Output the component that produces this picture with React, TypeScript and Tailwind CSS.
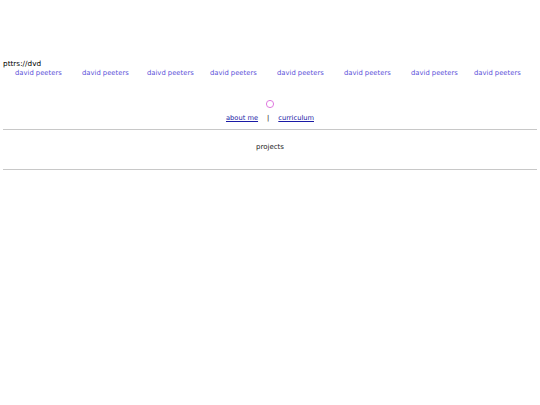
const names = [
  { label: 'david peeters', ml: 'ml-[12px]' },
  { label: 'david peeters', ml: 'ml-[21px]' },
  { label: 'daivd peeters', ml: 'ml-[19px]' },
  { label: 'david peeters', ml: 'ml-[17px]' },
  { label: 'david peeters', ml: 'ml-[21px]' },
  { label: 'david peeters', ml: 'ml-[21px]' },
  { label: 'david peeters', ml: 'ml-[21px]' },
  { label: 'david peeters', ml: 'ml-[17px]' },
]

export default function App() {
  return (
    <div className="min-h-screen bg-white px-[3px] pt-[59px] text-[7px] leading-[9px] text-black [font-family:'DejaVu_Sans',sans-serif]">
      <div className="text-[7.3px]">pttrs://dvd</div>
      <div className="mt-[1px] flex">
        {names.map((n, i) => (
          <a key={i} href="#" className={`${n.ml} w-[46px] whitespace-nowrap text-[6.8px] text-[#5a4fd9]`}>
            {n.label}
          </a>
        ))}
      </div>

      <div className="mt-[21px] flex flex-col items-center">
        <svg width="10" height="10" viewBox="0 0 10 10">
          <circle cx="5" cy="5" r="3.6" fill="none" stroke="#e07ae0" strokeWidth="1" />
        </svg>
        <div className="mt-[5px] flex gap-[9px] text-[6.7px]">
          <a href="#" className="text-[#1a1aa6] underline">about me</a>
          <span>|</span>
          <a href="#" className="text-[#1a1aa6] underline">curriculum</a>
        </div>
      </div>

      <hr className="mt-[6px] border-t border-[#c8c8c8]" />
      <div className="pt-[13px] pb-[13px] text-center text-[#222]">projects</div>
      <hr className="mt-[4px] border-t border-[#c8c8c8]" />
    </div>
  )
}
